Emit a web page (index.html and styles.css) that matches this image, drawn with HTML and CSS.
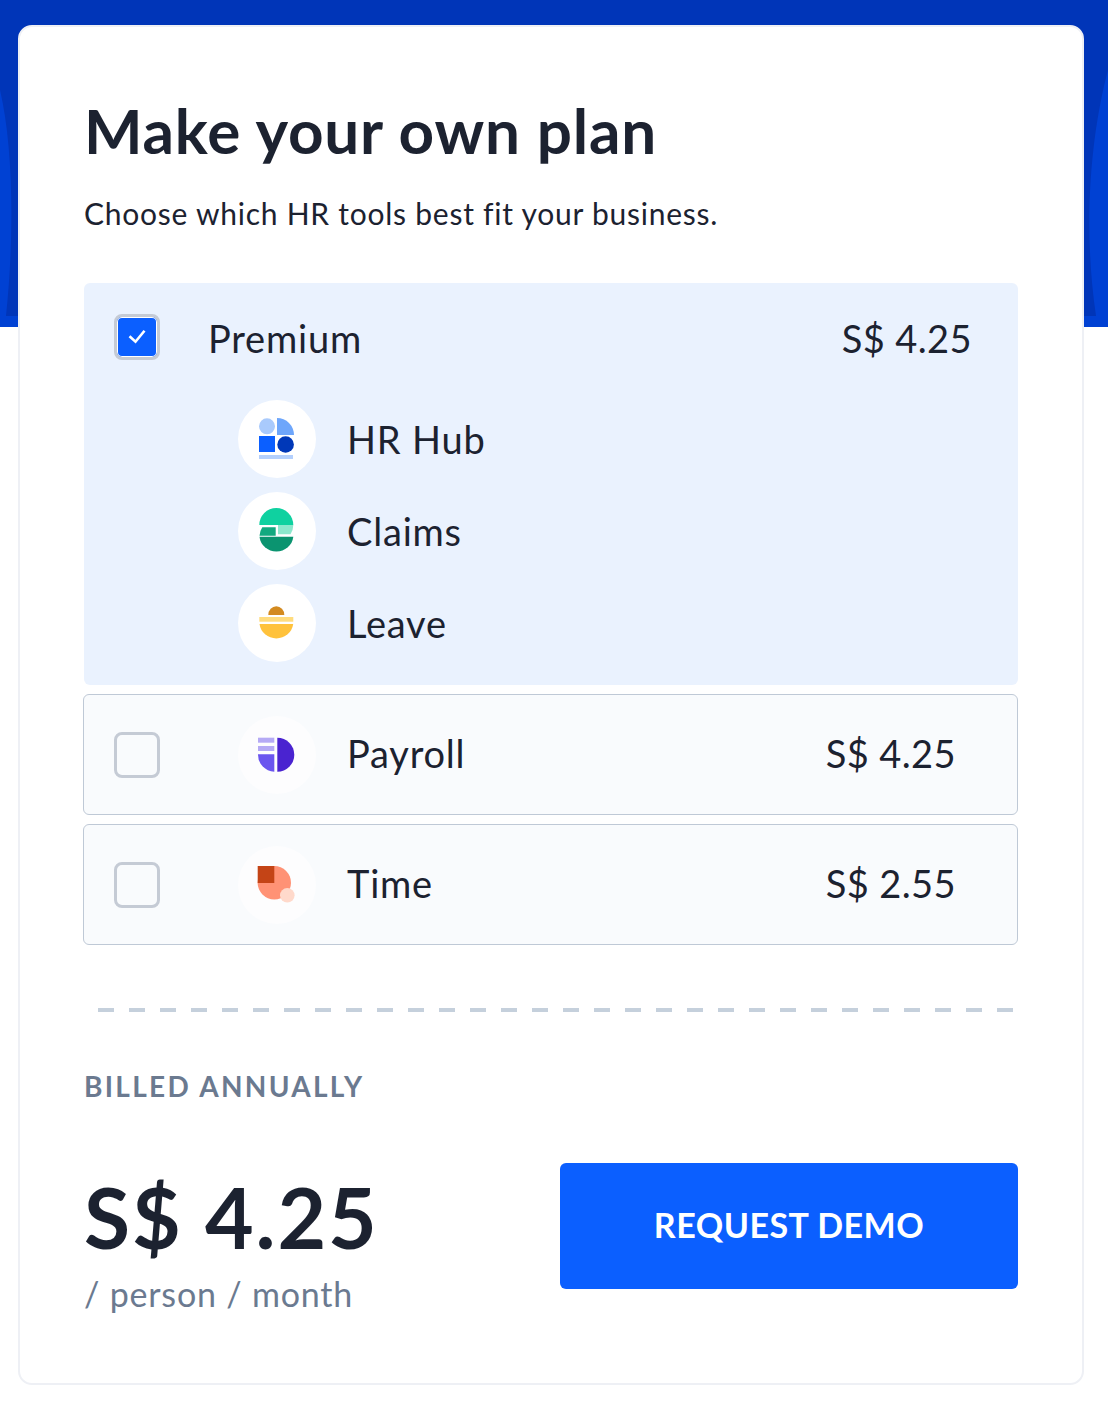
FILE: index.html
```html
<!DOCTYPE html>
<html lang="en">
<head>
    <meta charset="UTF-8">
    <meta name="viewport" content="width=device-width, initial-scale=1.0">
    <title>Make your own plan</title>
    <link rel="stylesheet" href="styles.css">
</head>
<body>
    <div class="hero">
        <svg class="hero-art" width="1108" height="327" viewBox="0 0 1108 327">
            <rect width="1108" height="327" fill="#0041d3"/>
            <path d="M0 0H1108V70C1092 130 1082 220 1096 316H6C14 240 14 150 0 90Z" fill="#0035b8"/>
        </svg>
    </div>

    <div class="card">
        <h1>Make your own plan</h1>
        <p class="intro">Choose which HR tools best fit your business.</p>

        <div class="plans">
            <div class="plan-premium">
                <div class="premium-head">
                    <span class="check check-on">
                        <svg width="38" height="38" viewBox="0 0 38 38">
                            <path d="M11.5 18.2L17.5 23.7L26.5 12.7" fill="none" stroke="#fff" stroke-width="2.6"/>
                        </svg>
                    </span>
                    <span class="plan-name">Premium</span>
                    <span class="plan-price">S$ 4.25</span>
                </div>
                <div class="tools">
                    <div class="tool">
                        <span class="tool-icon">
                            <svg width="78" height="78" viewBox="0 0 78 78">
                                <circle cx="29" cy="26.3" r="8" fill="#a9cafc"/>
                                <path d="M39 18A17 17 0 0 1 56 35H39Z" fill="#6ea6fb"/>
                                <rect x="21" y="36" width="16" height="16" fill="#0b5fff"/>
                                <circle cx="47.6" cy="44.5" r="8.3" fill="#0038b8"/>
                                <rect x="21" y="55" width="34" height="4" fill="#b4d0fd"/>
                            </svg>
                        </span>
                        <span class="plan-name">HR Hub</span>
                    </div>
                    <div class="tool">
                        <span class="tool-icon">
                            <svg width="78" height="78" viewBox="0 0 78 78">
                                <path d="M21.3 33A17 17 0 0 1 55.3 33Z" fill="#0fd1a0"/>
                                <path d="M40 33H55.3A17 17 0 0 1 52.5 42.3H40Z" fill="#8ce8cd"/>
                                <path d="M21.5 43.7A17 17 0 0 1 24.3 35.2H37.7V43.7Z" fill="#12a97f"/>
                                <path d="M21.5 44.7H55.3A17 16.6 0 0 1 21.5 44.7Z" fill="#0b9470"/>
                            </svg>
                        </span>
                        <span class="plan-name">Claims</span>
                    </div>
                    <div class="tool">
                        <span class="tool-icon">
                            <svg width="78" height="78" viewBox="0 0 78 78">
                                <path d="M30.3 31A8 8.7 0 0 1 46.3 31Z" fill="#d38a20"/>
                                <rect x="21.3" y="33" width="34" height="4.7" fill="#ffdc7e"/>
                                <path d="M21.5 40H55.2A17 16.7 0 0 1 21.5 40Z" fill="#ffc23c"/>
                            </svg>
                        </span>
                        <span class="plan-name">Leave</span>
                    </div>
                </div>
            </div>

            <div class="plan-row">
                <span class="check"></span>
                <span class="tool-icon tool-icon-row">
                    <svg width="78" height="78" viewBox="0 0 78 78">
                        <rect x="20" y="21.7" width="16.3" height="5" fill="#b5aaf5"/>
                        <rect x="20" y="30" width="16.3" height="5" fill="#b5aaf5"/>
                        <path d="M20 38.3H36.3V55.7A17 17 0 0 1 20 38.3Z" fill="#6a55ef"/>
                        <path d="M39.3 21.7A17 17 0 0 1 39.3 55.7Z" fill="#4a23d0"/>
                    </svg>
                </span>
                <span class="plan-name">Payroll</span>
                <span class="plan-price">S$ 4.25</span>
            </div>

            <div class="plan-row">
                <span class="check"></span>
                <span class="tool-icon tool-icon-row">
                    <svg width="78" height="78" viewBox="0 0 78 78">
                        <circle cx="36.3" cy="36.7" r="16.7" fill="#ff9275"/>
                        <rect x="19.7" y="20" width="16.6" height="17" fill="#c44416"/>
                        <circle cx="49.3" cy="49.3" r="7.3" fill="#ffd9cb"/>
                    </svg>
                </span>
                <span class="plan-name">Time</span>
                <span class="plan-price">S$ 2.55</span>
            </div>
        </div>

        <div class="dashes"></div>

        <div class="billed">BILLED ANNUALLY</div>

        <div class="total">
            <div class="total-left">
                <div class="total-price">S$ 4.25</div>
                <div class="total-unit">/ person / month</div>
            </div>
            <button class="demo-button">REQUEST DEMO</button>
        </div>
    </div>
</body>
</html>
```

FILE: styles.css
```css
body {
    margin: 0;
    position: relative;
    font-family: "Lato", "Open Sans", sans-serif;
    color: #1c2230;
    background-color: #fff;
    padding: 25px 24px 21px 18px;
}
.hero {
    position: absolute;
    top: 0;
    left: 0;
    width: 100%;
    height: 327px;
    overflow: hidden;
}
.hero-art {
    display: block;
}
.card {
    position: relative;
    box-sizing: border-box;
    width: 1066px;
    height: 1360px;
    padding: 0 64px 0 64px;
    background-color: #fff;
    border: 2px solid #eef0f5;
    border-radius: 14px;
}
h1 {
    margin: 0;
    padding-top: 66px;
    font-size: 62px;
    line-height: 74px;
    font-weight: 700;
    letter-spacing: 0.8px;
}
.intro {
    margin: 27px 0 0;
    font-size: 30px;
    line-height: 38px;
    letter-spacing: 0.75px;
}
.plans {
    display: flex;
    flex-direction: column;
    gap: 9px;
    margin-top: 51px;
}
.plan-premium {
    box-sizing: border-box;
    height: 402px;
    padding: 31px 46px 23px 30px;
    background-color: #eaf2fe;
    border-radius: 6px;
}
.premium-head {
    display: flex;
    align-items: center;
    gap: 48px;
}
.premium-head .plan-name,
.premium-head .plan-price {
    padding-top: 2px;
    line-height: 44px;
}
.check {
    box-sizing: border-box;
    flex: none;
    display: block;
    width: 46px;
    height: 46px;
    border: 3px solid #c5cbd5;
    border-radius: 8px;
    background-color: #fff;
}
.plan-row .check {
    background-color: transparent;
}
.check-on {
    background-color: #0b5fff;
    box-shadow: inset 0 0 0 1px #fff;
}
.check svg {
    display: block;
    margin: 1px;
}
.plan-name {
    font-size: 38px;
    line-height: 46px;
    letter-spacing: 0.8px;
}
.plan-price {
    margin-left: auto;
    font-size: 38px;
    line-height: 46px;
    letter-spacing: 0.4px;
}
.tools {
    display: flex;
    flex-direction: column;
    gap: 14px;
    margin-top: 40px;
    padding-left: 124px;
}
.tool {
    display: flex;
    align-items: center;
    gap: 31px;
}
.tool .plan-name {
    padding-bottom: 1px;
}
.tool-icon {
    flex: none;
    display: block;
    width: 78px;
    height: 78px;
    border-radius: 50%;
    background-color: #fff;
}
.tool-icon svg {
    display: block;
}
.tool-icon-row {
    background-color: #fdfdfe;
}
.plan-row {
    box-sizing: border-box;
    display: flex;
    align-items: center;
    height: 121px;
    margin-left: -1px;
    padding: 0 61px 0 30px;
    background-color: #f9fbfd;
    border: 1px solid #bfc9d6;
    border-radius: 6px;
}
.plan-row .plan-name,
.plan-row .plan-price {
    padding-bottom: 4px;
}
.plan-row .tool-icon {
    margin: 0 31px 0 78px;
}
.dashes {
    height: 4px;
    margin: 63px 5px 0 14px;
    background-image: repeating-linear-gradient(to right, #c5d0dc 0, #c5d0dc 16px, transparent 16px, transparent 31px);
}
.billed {
    margin-top: 57px;
    font-size: 28px;
    line-height: 34px;
    font-weight: 700;
    letter-spacing: 2.3px;
    color: #6b7a90;
}
.total {
    display: flex;
    justify-content: space-between;
    align-items: flex-start;
    margin-top: 45px;
}
.total-left {
    padding-top: 19px;
}
.total-price {
    font-size: 84px;
    line-height: 100px;
    font-weight: 700;
    letter-spacing: 1.9px;
}
.total-unit {
    margin-top: 6px;
    font-size: 34px;
    line-height: 42px;
    letter-spacing: 0.8px;
    color: #6b7a90;
}
.demo-button {
    width: 458px;
    height: 126px;
    margin-top: 15px;
    padding: 0 0 4px;
    border: none;
    border-radius: 6px;
    background-color: #0b5fff;
    color: #fff;
    font-family: inherit;
    font-size: 34px;
    font-weight: 700;
    letter-spacing: 0.5px;
}
```
